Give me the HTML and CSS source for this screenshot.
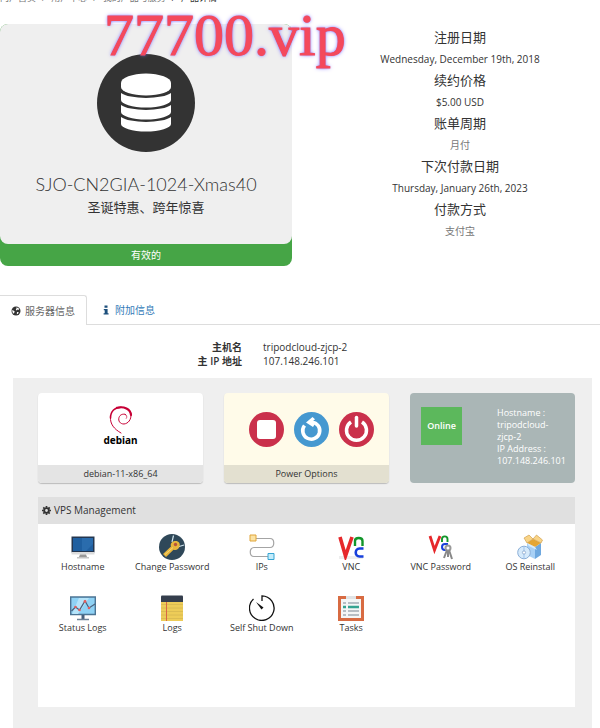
FILE: index.html
```
<!DOCTYPE html>
<html lang="zh-CN">
<head>
    <meta charset="UTF-8">
    <meta name="viewport" content="width=device-width, initial-scale=1.0">
    <title>产品详情</title>
    <link rel="stylesheet" href="styles.css">
</head>
<body>
    <nav class="crumb">
        <ul>
            <li><a href="#">门户首页</a></li>
            <li><a href="#">用户中心</a></li>
            <li><a href="#">我的产品与服务</a></li>
            <li class="current">产品详情</li>
        </ul>
    </nav>

    <section class="product">
        <div class="watermark">77700.vip</div>
        <div class="status">
            <div class="status-box">
                <svg class="db" viewBox="0 0 98 98">
                    <circle cx="49" cy="49" r="49" fill="#333"/>
                    <g fill="#fff">
                        <path d="M24 29A25 9.500 0 0 1 74 29V33A25 8.500 0 0 1 24 33Z"/>
                        <path d="M24 39A27 8 0 0 0 74 39V46A25 7.500 0 0 1 24 46Z"/>
                        <path d="M24 51A27 8 0 0 0 74 51V58A25 7.500 0 0 1 24 58Z"/>
                        <path d="M24 63A27 8 0 0 0 74 63V70A25 7.500 0 0 1 24 70Z"/>
                    </g>
                </svg>
                <h3>SJO-CN2GIA-1024-Xmas40</h3>
                <h4>圣诞特惠、跨年惊喜</h4>
            </div>
            <div class="status-text">有效的</div>
        </div>
        <dl class="billing">
            <dt>注册日期</dt>
            <dd>Wednesday, December 19th, 2018</dd>
            <dt>续约价格</dt>
            <dd>$5.00 USD</dd>
            <dt>账单周期</dt>
            <dd class="light">月付</dd>
            <dt>下次付款日期</dt>
            <dd>Thursday, January 26th, 2023</dd>
            <dt>付款方式</dt>
            <dd class="light">支付宝</dd>
        </dl>
    </section>

    <nav class="tabs">
        <a class="active" href="#server">
            <svg viewBox="0 0 10 10"><circle cx="5" cy="5" r="4.500" fill="#333"/><path d="M5.500 1.200L8 2.500 7.800 4 6.500 3.600 5.500 4.600 4.800 3.800 5.400 2.800ZM1.200 4l1.600.8 1 1L3 7 2.700 7.800 1.500 6.300ZM6 6l1.800.2L7 7.800 5.800 8.200Z" fill="#fff"/></svg>
            服务器信息
        </a>
        <a href="#extra">
            <svg viewBox="0 0 10 10"><path d="M3.500.5h3v2.300h-3ZM2.800 3.900h3.800v4.300h1v1.300H2.600V8.200h1.100V5.200h-.9Z" fill="#1c4f7c"/></svg>
            附加信息
        </a>
    </nav>

    <dl class="host" id="server">
        <dt>主机名</dt>
        <dd>tripodcloud-zjcp-2</dd>
        <dt>主 IP 地址</dt>
        <dd>107.148.246.101</dd>
    </dl>

    <main class="panel">
        <div class="cards">
            <div class="card">
                <div class="card-body">
                    <div class="debian">
                        <svg viewBox="0 0 24 28" fill="none" stroke="#c70036" stroke-linecap="round">
                            <path d="M12 27C5 23 1 18 1.500 11.500" stroke-width="1"/>
                            <path d="M1.500 12C1.500 5 6 1.200 12 1.200" stroke-width="1.600"/>
                            <path d="M8 1.800C15 0 21.500 3 22 9" stroke-width="2.200"/>
                            <path d="M22 8C22.500 14 19 17.500 15 18C11 18 9 15 10 11.500C11 8.500 14 7.500 16.500 8.500" stroke-width="1"/>
                            <path d="M16 8.300C18 9 18.300 11 17.300 12.400" stroke-width=".7"/>
                        </svg>
                        <b>debian</b>
                    </div>
                </div>
                <div class="card-foot">debian-11-x86_64</div>
            </div>
            <div class="card power">
                <div class="card-body">
                    <button type="button" aria-label="Stop">
                        <svg viewBox="0 0 35 35"><circle cx="17.500" cy="17.500" r="17.500" fill="#ca304b"/><rect x="8" y="8" width="19" height="19" rx="3" fill="#fff"/></svg>
                    </button>
                    <button type="button" aria-label="Restart">
                        <svg viewBox="0 0 35 35"><circle cx="17.500" cy="17.500" r="17.500" fill="#4598d0"/><path d="M10.500 13.500A8.500 8.500 0 1 0 18 10.200" fill="none" stroke="#fff" stroke-width="3.600"/><path d="M12 10.500L18.500 5l2.500 2.300-2 1.700 2.500 2-2.500 4Z" fill="#fff"/></svg>
                    </button>
                    <button type="button" aria-label="Power off">
                        <svg viewBox="0 0 35 35"><circle cx="17.500" cy="17.500" r="17.500" fill="#ca304b"/><path d="M12 10A10 10 0 1 0 23 10" fill="none" stroke="#fff" stroke-width="3.500"/><path d="M17.500 5.500v8.500" stroke="#fff" stroke-width="3.500" stroke-linecap="round"/></svg>
                    </button>
                </div>
                <div class="card-foot">Power Options</div>
            </div>
            <div class="card online">
                <span class="badge">Online</span>
                <p>Hostname : tripodcloud-zjcp-2<br>IP Address : 107.148.246.101</p>
            </div>
        </div>

        <section class="manage">
            <h2>
                <svg viewBox="0 0 16 16"><circle cx="8" cy="8" r="4.200" fill="none" stroke="#333" stroke-width="3.400"/><path d="M8 0v3M8 13v3M0 8h3M13 8h3M2.300 2.300l2.200 2.200M11.500 11.500l2.200 2.200M2.300 13.700l2.200-2.200M11.500 4.500l2.200-2.200" stroke="#333" stroke-width="3"/></svg>
                VPS Management
            </h2>
            <ul>
                <li><a href="#">
                    <svg viewBox="0 0 26 26"><path d="M1.500 2.500h23v16h-23Z" fill="#24364f"/><path d="M3 4h20v13H3Z" fill="#1f5fa0"/><path d="M12 4h11v6l-7 7h-4Z" fill="#2a6cad"/><path d="M1.500 18h23v2.500h-23Z" fill="#dcdcdc"/><path d="M10 20.500h6l1 2.500H9Z" fill="#999"/><path d="M7 23h12v1.500H7Z" fill="#c3c3c3"/></svg>
                    Hostname
                </a></li>
                <li><a href="#">
                    <svg viewBox="0 0 26 26"><circle cx="13" cy="13" r="13" fill="#2f4859"/><path d="M14.500 1.500L13 8M25 11l-6.500 2" stroke="#cfe4ee" stroke-width="1.200"/><path d="M4 20l8-7.500c-1-3 1-5.500 4.500-5.500s5 2.500 4 5.500-3 4-6 3.200L7 23Z" fill="#e7b53c"/><path d="M6 20.500l8-7" stroke="#f7d978" stroke-width="1"/><circle cx="16.500" cy="10.500" r="1.700" fill="#b6533c"/></svg>
                    Change Password
                </a></li>
                <li><a href="#">
                    <svg viewBox="0 0 26 26" fill="none"><path d="M7 4.500h14c5 0 5 9 0 9H5c-5 0-5 9 0 9h14" stroke="#a4a4a4" stroke-width="1.200"/><path d="M1 1h6v6H1Z" fill="#fbe3a4" stroke="#e0a53b"/><path d="M19 19.500h6v6h-6Z" fill="#c4ecfb" stroke="#36a5d3"/></svg>
                    IPs
                </a></li>
                <li><a href="#">
                    <svg viewBox="0 0 26 26" fill="none"><path d="M1 22h24v3H1Z" fill="#eee"/><path d="M2 3l5.500 19L14 3" stroke="#e6282b" stroke-width="3.600"/><path d="M17 12V7c0-4 7.500-4 7.500 0v5" stroke="#12962a" stroke-width="2.400"/><path d="M25.500 14.500h-4c-5 0-5 8 0 8h4" stroke="#1740dc" stroke-width="2.600"/></svg>
                    VNC
                </a></li>
                <li><a href="#">
                    <svg viewBox="0 0 26 26" fill="none"><path d="M2 2l4.500 14L12 2" stroke="#e6282b" stroke-width="2.800"/><path d="M14 8V5c0-3.500 5.500-3.500 5.500 0v3" stroke="#12962a" stroke-width="1.900"/><path d="M20 10h-3c-4 0-4 6 0 6h2" stroke="#1740dc" stroke-width="2"/><circle cx="20" cy="14" r="2.500" stroke="#999" stroke-width="2"/><path d="M19 16l-3 8M21 16l3 9M20 17v6" stroke="#888" stroke-width="2"/></svg>
                    VNC Password
                </a></li>
                <li><a href="#">
                    <svg viewBox="0 0 26 26"><path d="M10 9l8 4v12l-8-4Z" fill="#a8d0f5"/><path d="M18 13l6-4v12l-6 4Z" fill="#6ea8df"/><path d="M10 9l6-4 8 4-6 4Z" fill="#e4a634"/><path d="M10 9L7 4l5-3 4 4ZM24 9l1.500-3-6-5L16 5Z" fill="#f9d487" stroke="#ca963c" stroke-width=".6"/><path d="M10 9l8 4 2 3-8-4Z" fill="#d8ecfb"/><circle cx="7" cy="18.500" r="6.300" fill="#d6eafb" stroke="#8aaed7"/><path d="M7 12.500v4.500M7 20v4.500" stroke="#9fc3eb"/><circle cx="7" cy="18.500" r="1.600" fill="#fff" stroke="#7c9cc5" stroke-width=".7"/></svg>
                    OS Reinstall
                </a></li>
                <li><a href="#">
                    <svg viewBox="0 0 26 26" fill="none"><path d="M.7 2h24.600v17.500H.7Z" fill="#8fd2f5" stroke="#4c7494" stroke-width="1.400"/><path d="M9 3h10L8 19H2Z" fill="#b6e4fa"/><path d="M1.500 16l4-4 4 3L15 6l4 7 6-4" stroke="#49617d" stroke-width="1.200"/><g fill="#e35d5d"><circle cx="5.500" cy="12" r="1.300"/><circle cx="9.500" cy="15" r="1.300"/><circle cx="15" cy="6.500" r="1.400"/><circle cx="19" cy="13" r="1.300"/></g><path d="M13 20v4" stroke="#49617d" stroke-width="3"/><path d="M7 24.500h12" stroke="#6f8499" stroke-width="1.500"/></svg>
                    Status Logs
                </a></li>
                <li><a href="#">
                    <svg viewBox="0 0 26 26"><path d="M2 5h22v21H2Z" fill="#edcc58"/><path d="M2 9.500h22M2 13h22M2 16.500h22M2 20h22M2 23.500h22" stroke="#d6b850" stroke-width=".8"/><path d="M7.500 6v20" stroke="#d96843" stroke-width="1"/><path d="M2 1.500Q2 .5 3 .5h20q1 0 1 1V7H2Z" fill="#353e4d"/></svg>
                    Logs
                </a></li>
                <li><a href="#">
                    <svg viewBox="0 0 26 26" fill="none"><path d="M4.500 4A12.300 12.300 0 1 0 13 .8V6" stroke="#111" stroke-width="1.300"/><path d="M7 7l7.500 5.500-2 2Z" fill="#111"/></svg>
                    Self Shut Down
                </a></li>
                <li><a href="#">
                    <svg viewBox="0 0 26 26" fill="none"><path d="M0 1h26v25H0Z" fill="#d86b42"/><path d="M3 4h20v19H3Z" fill="#f4f6f6"/><path d="M8 1h10v3H8Z" fill="#dfe3e5"/><path d="M5 8h3M10 8h11M5 16h3M10 16h11M5 20h3M10 20h11" stroke="#b6bec4" stroke-width="2"/><path d="M5 12h3M10 12h11" stroke="#35a491" stroke-width="2.400"/></svg>
                    Tasks
                </a></li>
            </ul>
        </section>
    </main>
</body>
</html>
```
FILE: styles.css
```
*{
    margin:0;
    padding:0;
    box-sizing:border-box;
    list-style:none;
}
body{
    font:10px/14px "Open Sans","Noto Sans CJK SC",sans-serif;
    color:#333;
    background:#fff;
}
a{
    color:inherit;
    text-decoration:none;
}
svg{
    display:block;
}
/* 面包屑只露出底部 */
.crumb{
    height:4px;
    overflow:hidden;
    display:flex;
    align-items:flex-end;
    color:#777;
    font-size:9px;
}
.crumb ul{
    display:flex;
    line-height:12px;
}
.crumb li + li::before{
    content:"/";
    padding:0 6px;
}
.crumb .current{
    color:#333;
}
.product{
    position:relative;
    display:grid;
    grid-template-columns:292fr 280fr;
    column-gap:28px;
    padding-top:20px;
    text-align:center;
}
.watermark{
    position:absolute;
    left:104px;
    top:-2px;
    font:60px/66px "Liberation Serif",serif;
    color:#f4495c;
    -webkit-text-stroke:1px #f4495c;
    text-shadow:0 0 2px #7a6cf5,0 0 4px #8a7cff;
}
.status{
    background:#46a546;
    border-radius:8px;
}
.status-box{
    height:220px;
    padding-top:30px;
    background:#efefef;
    border-radius:8px;
}
.db{
    width:98px;
    height:98px;
    margin:0 auto;
}
.status-box h3{
    margin-top:20px;
    font:300 18px/25px Lato,sans-serif;
}
.status-box h4{
    font-size:13px;
    font-weight:400;
    line-height:21px;
}
.status-text{
    color:#fff;
    line-height:22px;
}
.billing{
    padding-top:3px;
}
.billing dt{
    font-size:13px;
    line-height:21px;
}
.billing dd{
    line-height:22px;
}
.billing .light{
    color:#777;
}
.tabs{
    display:flex;
    margin-top:29px;
    border-bottom:1px solid #ddd;
}
.tabs a{
    display:flex;
    align-items:center;
    gap:4px;
    height:29px;
    padding:0 11px;
    color:#337ab7;
}
.tabs svg{
    width:10px;
    height:10px;
}
.tabs .active{
    height:30px;
    margin-bottom:-1px;
    margin-right:3px;
    color:#666;
    background:#fff;
    border:1px solid #ddd;
    border-width:1px 1px 0 0;
    border-radius:0 3px 0 0;
}
.host{
    display:grid;
    grid-template-columns:242fr 337fr;
    column-gap:21px;
    padding:15px 0 10px;
}
.host dt{
    text-align:right;
    font-weight:600;
}
.panel{
    margin:0 8px 0 13px;
    padding:15px 17px 21px 25px;
    background:#efefef;
}
.cards{
    display:grid;
    grid-template-columns:repeat(3,1fr);
    gap:21px;
}
.card{
    height:90px;
    display:flex;
    flex-direction:column;
    overflow:hidden;
    background:#fff;
    border-radius:4px;
    box-shadow:0 1px 1px #bbb;
}
.card-body{
    flex:1;
    display:flex;
    justify-content:center;
    align-items:center;
    gap:10px;
}
.card-foot{
    background:#e4e4e4;
    text-align:center;
    font-size:9px;
    line-height:18px;
}
.debian{
    display:flex;
    flex-direction:column;
    align-items:center;
    padding-bottom:6px;
}
.debian svg{
    width:24px;
    height:28px;
}
.debian b{
    font-family:"Noto Sans",sans-serif;
    font-size:10px;
    line-height:12px;
    color:#000;
}
.power{
    background:#fffbe9;
}
.power .card-body{
    padding-left:10px;
}
.power .card-foot{
    background:#e3e0d0;
}
.power button{
    width:35px;
    height:35px;
    border:0;
    background:none;
    cursor:pointer;
}
.online{
    flex-direction:row;
    justify-content:space-between;
    align-items:flex-start;
    padding:14px 8px 0 11px;
    background:#aab6b6;
    box-shadow:none;
    color:#fff;
    font-size:9px;
    line-height:12px;
}
.badge{
    width:41px;
    line-height:38px;
    background:#5cb85c;
    text-align:center;
    font-weight:600;
}
.online p{
    width:70px;
}
.manage{
    margin-top:14px;
    min-height:210px;
    background:#fff;
}
.manage h2{
    display:flex;
    align-items:center;
    gap:3px;
    padding-left:4px;
    background:#e0e0e0;
    font-size:10px;
    font-weight:400;
    line-height:27px;
}
.manage h2 svg{
    width:9px;
    height:9px;
}
.manage ul{
    display:grid;
    grid-template-columns:repeat(6,1fr);
    row-gap:21px;
    padding-top:10px;
}
.manage li a{
    display:block;
    text-align:center;
    font-size:9px;
    white-space:nowrap;
}
.manage li svg{
    width:26px;
    height:26px;
    margin:0 auto;
}
```
